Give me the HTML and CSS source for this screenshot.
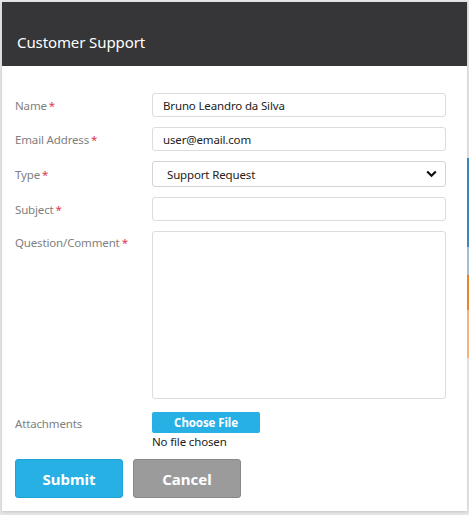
FILE: index.html
```html
<!DOCTYPE html>
<html>
<head>
<meta charset="utf-8">
<link rel="stylesheet" href="styles.css">
</head>
<body>
<div class="page">
  <div class="dialog">
    <div class="header"><span class="title">Customer Support</span></div>
    <form class="form">
      <div class="row">
        <label class="label">Name<span class="req">*</span></label>
        <input class="field" type="text" value="Bruno Leandro da Silva">
      </div>
      <div class="row">
        <label class="label">Email Address<span class="req">*</span></label>
        <input class="field" type="text" value="user@email.com">
      </div>
      <div class="row">
        <label class="label">Type<span class="req">*</span></label>
        <div class="select">
          <span>Support Request</span>
          <svg class="chev" width="11" height="8" viewBox="0 0 11 8"><path d="M1.2 1.5 L5.5 5.8 L9.8 1.5" fill="none" stroke="#111" stroke-width="2.2"/></svg>
        </div>
      </div>
      <div class="row">
        <label class="label">Subject<span class="req">*</span></label>
        <input class="field" type="text" value="">
      </div>
      <div class="row row-top">
        <label class="label label-top">Question/Comment<span class="req">*</span></label>
        <textarea class="area"></textarea>
      </div>
      <div class="row row-attach">
        <label class="label label-attach">Attachments</label>
        <div class="file">
          <span class="choose">Choose File</span>
          <span class="nofile">No file chosen</span>
        </div>
      </div>
      <div class="actions">
        <span class="btn submit">Submit</span>
        <span class="btn cancel">Cancel</span>
      </div>
    </form>
  </div>
  <div class="strip">
    <div class="s s1"></div>
    <div class="s s2"></div>
    <div class="s s3"></div>
    <div class="s s4"></div>
    <div class="s s5"></div>
  </div>
</div>
</body>
</html>
```

FILE: styles.css
```css
* { box-sizing: border-box; }
html, body { margin: 0; padding: 0; }
body {
  width: 469px;
  height: 515px;
  overflow: hidden;
  background: #e6e6e6;
  font-family: "Noto Sans", "Open Sans", sans-serif;
}
.page {
  display: flex;
  align-items: flex-start;
  padding: 2px 0 0 2px;
  height: 515px;
}
.dialog {
  width: 465px;
  height: 509px;
  background: #fff;
  box-shadow: 0 1px 3px rgba(0,0,0,0.15);
  display: flex;
  flex-direction: column;
}
.header {
  height: 64px;
  background: #363638;
  display: flex;
  align-items: flex-end;
  padding: 0 15px 14px 15px;
}
.title {
  color: #fff;
  font-size: 15px;
  line-height: 20px;
  letter-spacing: -0.1px;
}
.form {
  margin: 0;
  padding: 27px 21px 0 13px;
  display: flex;
  flex-direction: column;
  gap: 10px;
}
.row {
  display: flex;
  align-items: center;
}
.row-top { align-items: flex-start; }
.label {
  width: 137px;
  flex: none;
  font-size: 11.5px;
  color: #808080;
  letter-spacing: -0.15px;
}
.label-top { padding-top: 4px; }
.req { color: #e0364f; margin-left: 2px; }
.field {
  width: 294px;
  height: 24px;
  border: 1px solid #dcdcdc;
  border-radius: 3px;
  padding: 0 10px;
  font-family: inherit;
  font-size: 11.5px;
  color: #222;
  letter-spacing: -0.15px;
  outline: none;
}
.select {
  width: 294px;
  height: 26px;
  border: 1px solid #d4d4d4;
  border-radius: 3px;
  padding: 0 8px 0 14px;
  display: flex;
  align-items: center;
  justify-content: space-between;
  font-size: 11.5px;
  color: #222;
  letter-spacing: -0.15px;
}
.chev { display: block; }
.area {
  width: 294px;
  height: 168px;
  border: 1px solid #dcdcdc;
  border-radius: 3px;
  resize: none;
  outline: none;
  margin: 0;
}
.row-attach {
  align-items: flex-start;
  margin-top: 3px;
}
.label-attach { padding-top: 4px; }
.file {
  display: flex;
  flex-direction: column;
  align-items: flex-start;
}
.choose {
  width: 108px;
  height: 21px;
  background: #26b0e4;
  border-radius: 2px;
  color: #fff;
  font-weight: bold;
  font-size: 11.5px;
  display: flex;
  align-items: center;
  justify-content: center;
  letter-spacing: -0.1px;
}
.nofile {
  font-size: 11.5px;
  color: #222;
  line-height: 18px;
  letter-spacing: -0.15px;
}
.actions {
  display: flex;
  gap: 10px;
  margin-top: -2px;
}
.btn {
  width: 108px;
  height: 39px;
  border-radius: 3px;
  color: #fff;
  font-weight: bold;
  font-size: 15px;
  display: flex;
  align-items: center;
  justify-content: center;
}
.submit { background: #26b0e4; border: 1px solid #1fa3d6; }
.cancel { background: #9b9b9b; border: 1px solid #888; }
.strip {
  width: 2px;
  display: flex;
  flex-direction: column;
  padding-top: 156px;
}
.s { width: 2px; }
.s1 { height: 89px; background: #3a87bd; }
.s2 { height: 28px; background: #a4bcd6; }
.s3 { height: 35px; background: #e8852c; }
.s4 { height: 48px; background: #f0b47c; }
.s5 { height: 40px; background: #e0e0e0; }
```
